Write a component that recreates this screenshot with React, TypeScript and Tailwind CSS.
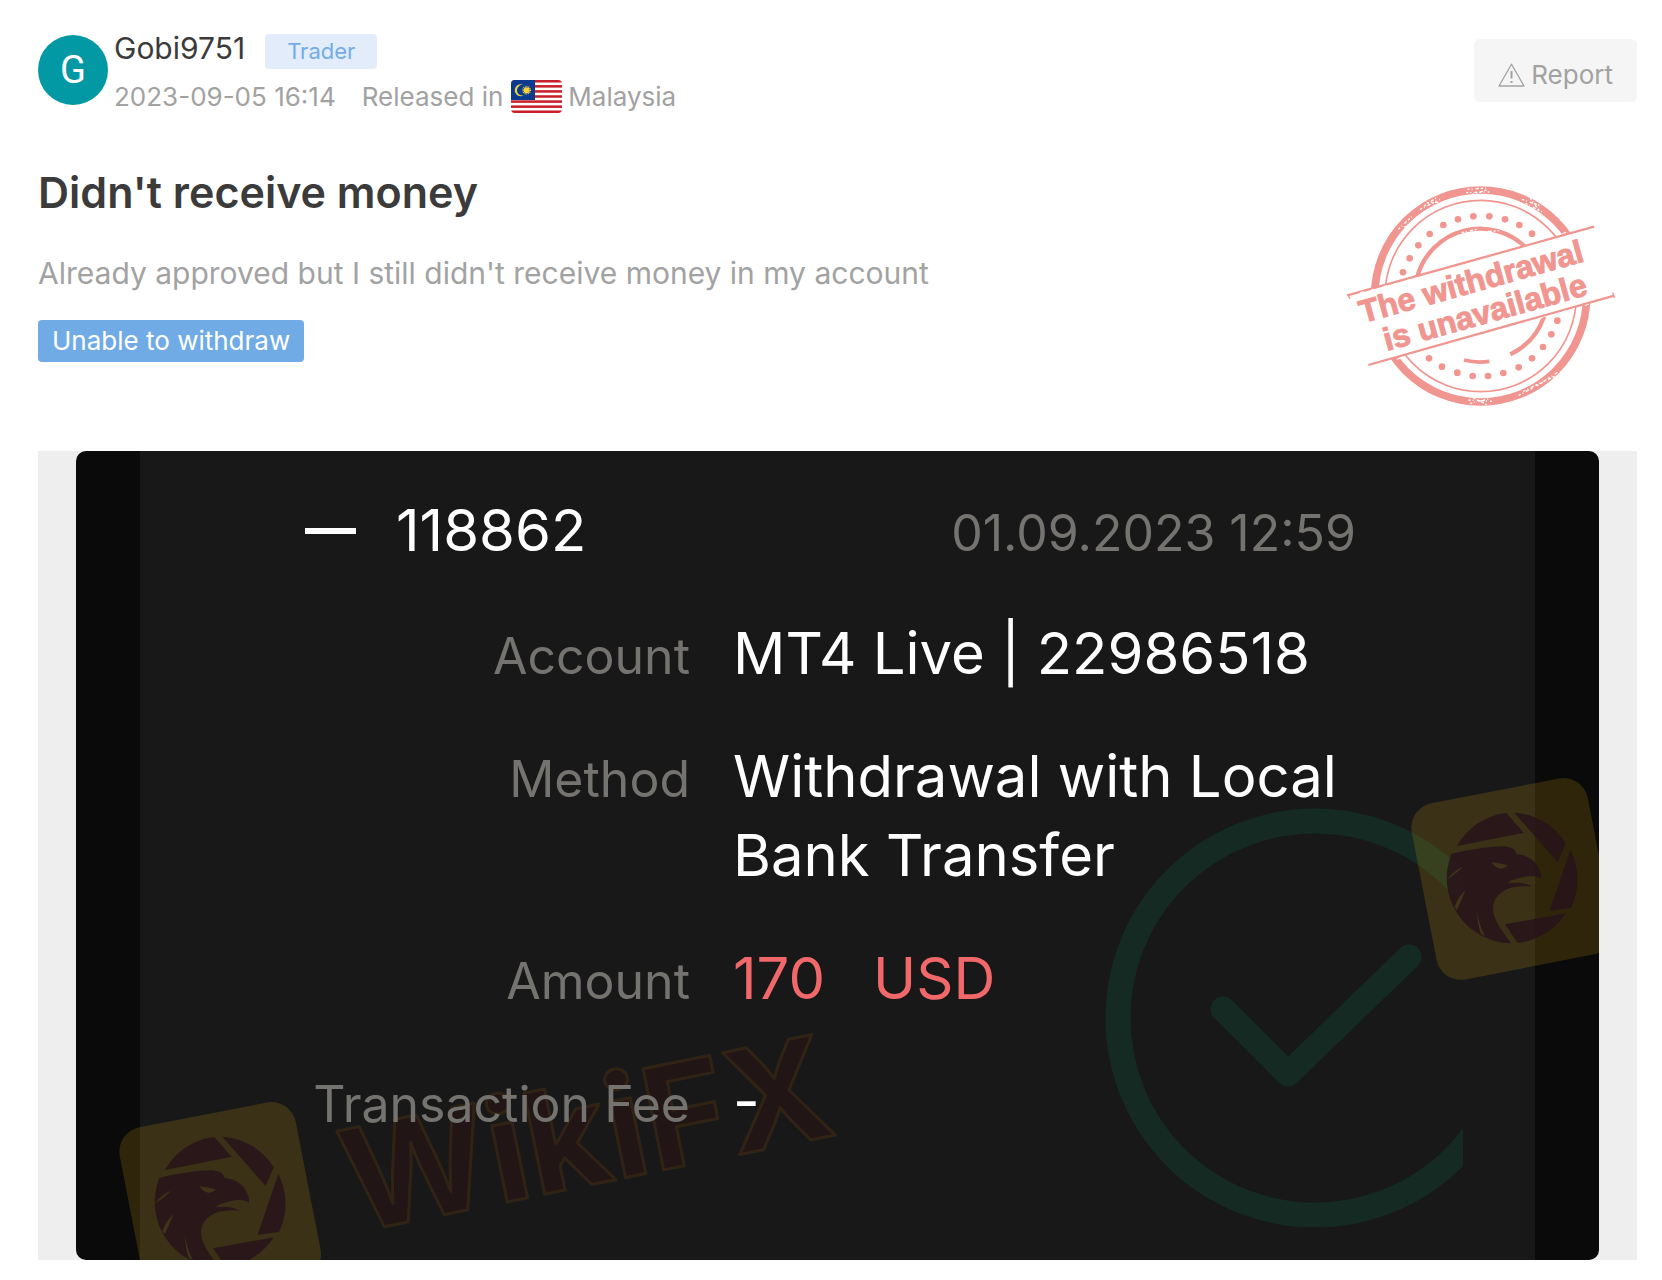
import React from 'react';

interface DetailRow {
  label: string;
  value: React.ReactNode;
}

const rows: DetailRow[] = [
  { label: 'Account', value: 'MT4 Live | 22986518' },
  {
    label: 'Method',
    value: (
      <>
        Withdrawal with Local
        <br />
        Bank Transfer
      </>
    ),
  },
  {
    label: 'Amount',
    value: (
      <span className="flex gap-12 text-[#f0686a]">
        <span>170</span>
        <span>USD</span>
      </span>
    ),
  },
  { label: 'Transaction Fee', value: '-' },
];

const stampDots = [
  [430, 139], [478, 139], [525, 148], [568, 165], [606, 191], [384, 148],
  [340, 165], [299, 192], [265, 226], [239, 265], [219, 307], [682, 452],
  [664, 493], [639, 531], [606, 565], [566, 592], [520, 609], [474, 618],
  [428, 618], [382, 608], [336, 590], [297, 565],
];

const MalaysiaFlag = () => (
  <svg className="h-[33px] w-[51px] shrink-0 rounded-sm" viewBox="0 0 51 33" role="img" aria-label="Flag of Malaysia">
    <rect width="51" height="33" fill="#fff" />
    {[0, 2, 4, 6, 8, 10, 12].map((n) => (
      <rect key={n} y={(n * 33) / 13} width="51" height={33 / 13} fill="#c8202c" />
    ))}
    <rect width="24" height="20" fill="#0b3a8e" />
    <path d="M12.8 5A6 6 0 1 0 12.8 15.4A5.4 5.4 0 1 1 12.8 5Z" fill="#f6d33c" />
    <circle cx="15.6" cy="10.2" r="3" fill="#f6d33c" />
    <circle cx="15.6" cy="10.2" r="3.7" fill="none" stroke="#f6d33c" strokeWidth="1.4" strokeDasharray="0.9 0.8" />
  </svg>
);

const WarningIcon = () => (
  <svg className="h-6 w-[27px]" viewBox="0 0 27 24" fill="none" stroke="currentColor" strokeLinejoin="round" aria-hidden="true">
    <path d="M13.5 1.2L26 23H1Z" strokeWidth="1.3" />
    <path d="M13.5 8V15.5M13.5 18V20" strokeWidth="2" />
  </svg>
);

const Stamp = () => (
  <svg className="h-[250px] w-[300px] shrink-0" viewBox="0 0 900 750" role="img" aria-label="The withdrawal is unavailable">
    <g fill="none" stroke="#f0958f">
      <circle cx="452" cy="378" r="318" strokeWidth="23" />
      <circle cx="452" cy="378" r="287" strokeWidth="5" />
      <path d="M262 320A195 195 0 0 1 590 235" strokeWidth="13" />
      <path d="M642 440A195 195 0 0 1 541 553" strokeWidth="13" />
      <path d="M402 570Q440 580 478 574" strokeWidth="11" />
    </g>
    {stampDots.map(([x, y]) => (
      <circle key={`${x}-${y}`} cx={x} cy={y} r="10" fill="#f0958f" />
    ))}
    {/* worn ink */}
    <g fill="none" stroke="#fff" strokeWidth="4" strokeDasharray="7 6 3 9 10 5">
      <path d="M205 178L245 140M222 172L255 148M270 118L330 88M282 108L318 84M290 98L328 96" />
      <path d="M412 58L470 54M408 68L478 66M425 74L470 60" />
      <path d="M576 88L632 108M586 100L640 128M600 84L628 122M612 100L636 108" />
      <path d="M415 690L486 694M420 700L480 686M430 684L470 704" />
      <path d="M566 676L612 652M580 664L640 634M620 648L684 606M632 640L676 618" />
      <path d="M395 188L440 178M450 186L510 182" />
    </g>
    <path d="M52 376L792 170L853 377L115 585Z" fill="#fff" />
    <g fill="none" stroke="#f0958f" strokeWidth="7">
      <path d="M52 376L792 170M115 585L853 377" />
      <path d="M52 372L60 386M848 368L853 384" strokeWidth="4" />
    </g>
    <path d="M90 368L250 326M560 228L780 168M200 568L350 526M560 465L780 402" fill="none" stroke="#fff" strokeWidth="3" strokeDasharray="12 23 5 31" />
    <g fill="#f0958f" stroke="#f0958f" strokeWidth="3" fontFamily="'Liberation Sans', sans-serif" fontWeight="700" fontSize="96">
      <text transform="translate(98 460) rotate(-15.6)">The withdrawal</text>
      <text transform="translate(170 543) rotate(-15.6)">is unavailable</text>
    </g>
  </svg>
);

const EagleBadge = ({ x, y }: { x: number; y: number }) => (
  <g transform={`translate(${x} ${y}) scale(0.3333) translate(-395 -352)`}>
    <rect x="126" y="86" width="538" height="538" rx="74" transform="rotate(-11 395 352)" fill="#ffc410" fillOpacity="0.15" />
    <g fill="#28131a" fillOpacity="0.88">
      <path d="M230 256A196 196 0 0 1 378 157L430 216Z" />
      <path d="M402 156A196 196 0 0 1 556 248L532 304Z" />
      <path d="M570 268A196 196 0 0 1 572 442L508 450Z" />
      <path d="M556 458A196 196 0 0 1 412 547L374 491Z" />
      <path d="M213 280C270 266 340 256 372 257C395 259 408 270 409 281C440 283 465 300 472 318C480 330 484 342 482 354C470 344 445 344 425 350C405 356 388 358 384 368C405 364 435 366 455 378C430 376 400 376 380 386C350 400 338 420 338 445C340 480 365 510 392 548A196 196 0 0 1 213 280Z" />
    </g>
    <g fill="#3f3319">
      <path d="M333 304C350 308 365 308 382 314C368 330 348 328 333 304Z" />
      <path d="M198 358C212 340 228 326 248 318C232 334 218 344 198 358Z" />
      <path d="M222 440C230 418 240 402 256 388C246 410 240 426 230 448Z" />
      <path d="M291 452C294 480 302 505 314 526L302 520C294 500 290 475 291 452Z" />
    </g>
  </g>
);

const Watermark = () => (
  <svg className="pointer-events-none absolute inset-0 h-full w-full" viewBox="0 0 1523 809" preserveAspectRatio="xMidYMid slice" aria-hidden="true">
    <text
      transform="translate(278 782) rotate(-11.5)"
      fontFamily="Inter, sans-serif"
      fontWeight="700"
      fontSize="142"
      fill="#50100c"
      fillOpacity="0.18"
      stroke="#7a5410"
      strokeOpacity="0.22"
      strokeWidth="3"
      strokeLinejoin="round"
    >
      WikiFX
    </text>
    <EagleBadge x={144} y={751} />
    <EagleBadge x={1436} y={427} />
  </svg>
);

const CheckMark = () => (
  <svg className="absolute inset-0 h-full w-full" viewBox="0 0 1523 809" preserveAspectRatio="xMidYMid slice" aria-hidden="true">
    <clipPath id="check-clip">
      <rect width="1387" height="809" />
    </clipPath>
    <g fill="none" stroke="#142a23" clipPath="url(#check-clip)">
      <circle cx="1239" cy="567" r="197" strokeWidth="25" />
      <path d="M1147 558L1212 623L1333 506" strokeWidth="25" strokeLinecap="round" strokeLinejoin="round" />
    </g>
  </svg>
);

const Receipt = () => (
  <div className="relative flex overflow-hidden rounded-[10px] bg-[#0a0a0a] px-16 font-['Inter',sans-serif]">
    <div className="flex-1 bg-[#181818] pt-10 pb-[119px]">
      <CheckMark />
      <Watermark />
      <div className="relative flex items-baseline pr-[179px] pl-[165px]">
        <span className="mr-10 h-[6px] w-[51px] self-center bg-white" />
        <span className="text-[58px] leading-[79px] text-white">118862</span>
        <span className="ml-auto text-[50px] leading-[60px] text-[#75736f]">01.09.2023 12:59</span>
      </div>
      <dl className="relative mt-11 flex flex-col gap-11">
        {rows.map((row) => (
          <div key={row.label} className="grid grid-cols-[550px_1fr] items-baseline gap-[43px]">
            <dt className="text-right text-[50px] leading-[60px] text-[#75736f]">{row.label}</dt>
            <dd className="text-[58px] leading-[79px] text-white">{row.value}</dd>
          </div>
        ))}
      </dl>
    </div>
  </div>
);

export default function App() {
  return (
    <main className="min-h-screen bg-white pt-[33px] pr-[25px] pb-5 pl-[38px] font-['Inter',sans-serif] text-[#a2a2a2]">
      <header className="flex items-start justify-between">
        <div className="flex items-start gap-1.5">
          <div className="mt-0.5 flex size-[70px] shrink-0 items-center justify-center rounded-full bg-[#0299a5] font-['Roboto',sans-serif] text-[38px] text-white">
            G
          </div>
          <div className="flex flex-col gap-[11px]">
            <div className="flex items-baseline gap-5">
              <span className="text-[30px] leading-[30px] text-[#3b3b3b]">Gobi9751</span>
              <span className="rounded bg-[#e2ecfa] px-[22px] text-[22px] leading-[35px] text-[#74ace8]">Trader</span>
            </div>
            <div className="flex items-center text-[26px] leading-[33px]">
              <time className="mr-[26px]">2023-09-05 16:14</time>
              <span className="mr-2">Released in</span>
              <MalaysiaFlag />
              <span className="ml-1.5">Malaysia</span>
            </div>
          </div>
        </div>
        <button className="mt-1.5 flex h-[63px] items-center gap-1.5 rounded-md bg-[#f5f5f5] px-6 pt-2 text-[26px]">
          <WarningIcon />
          Report
        </button>
      </header>

      <section className="mt-[52px] flex items-start justify-between pr-[7px]">
        <div>
          <h1 className="text-[43px] leading-[54px] font-semibold text-[#3b3b3b]">Didn't receive money</h1>
          <p className="mt-[33px] text-[30px] leading-[42px]">
            Already approved but I still didn't receive money in my account
          </p>
          <span className="mt-[26px] inline-block rounded bg-[#70abe6] px-[14px] text-[26px] leading-[42px] text-white">
            Unable to withdraw
          </span>
        </div>
        <div className="pt-[5px]">
          <Stamp />
        </div>
      </section>

      <figure className="mt-[31px] bg-[#eeeeee] px-[38px]">
        <Receipt />
      </figure>
    </main>
  );
}
